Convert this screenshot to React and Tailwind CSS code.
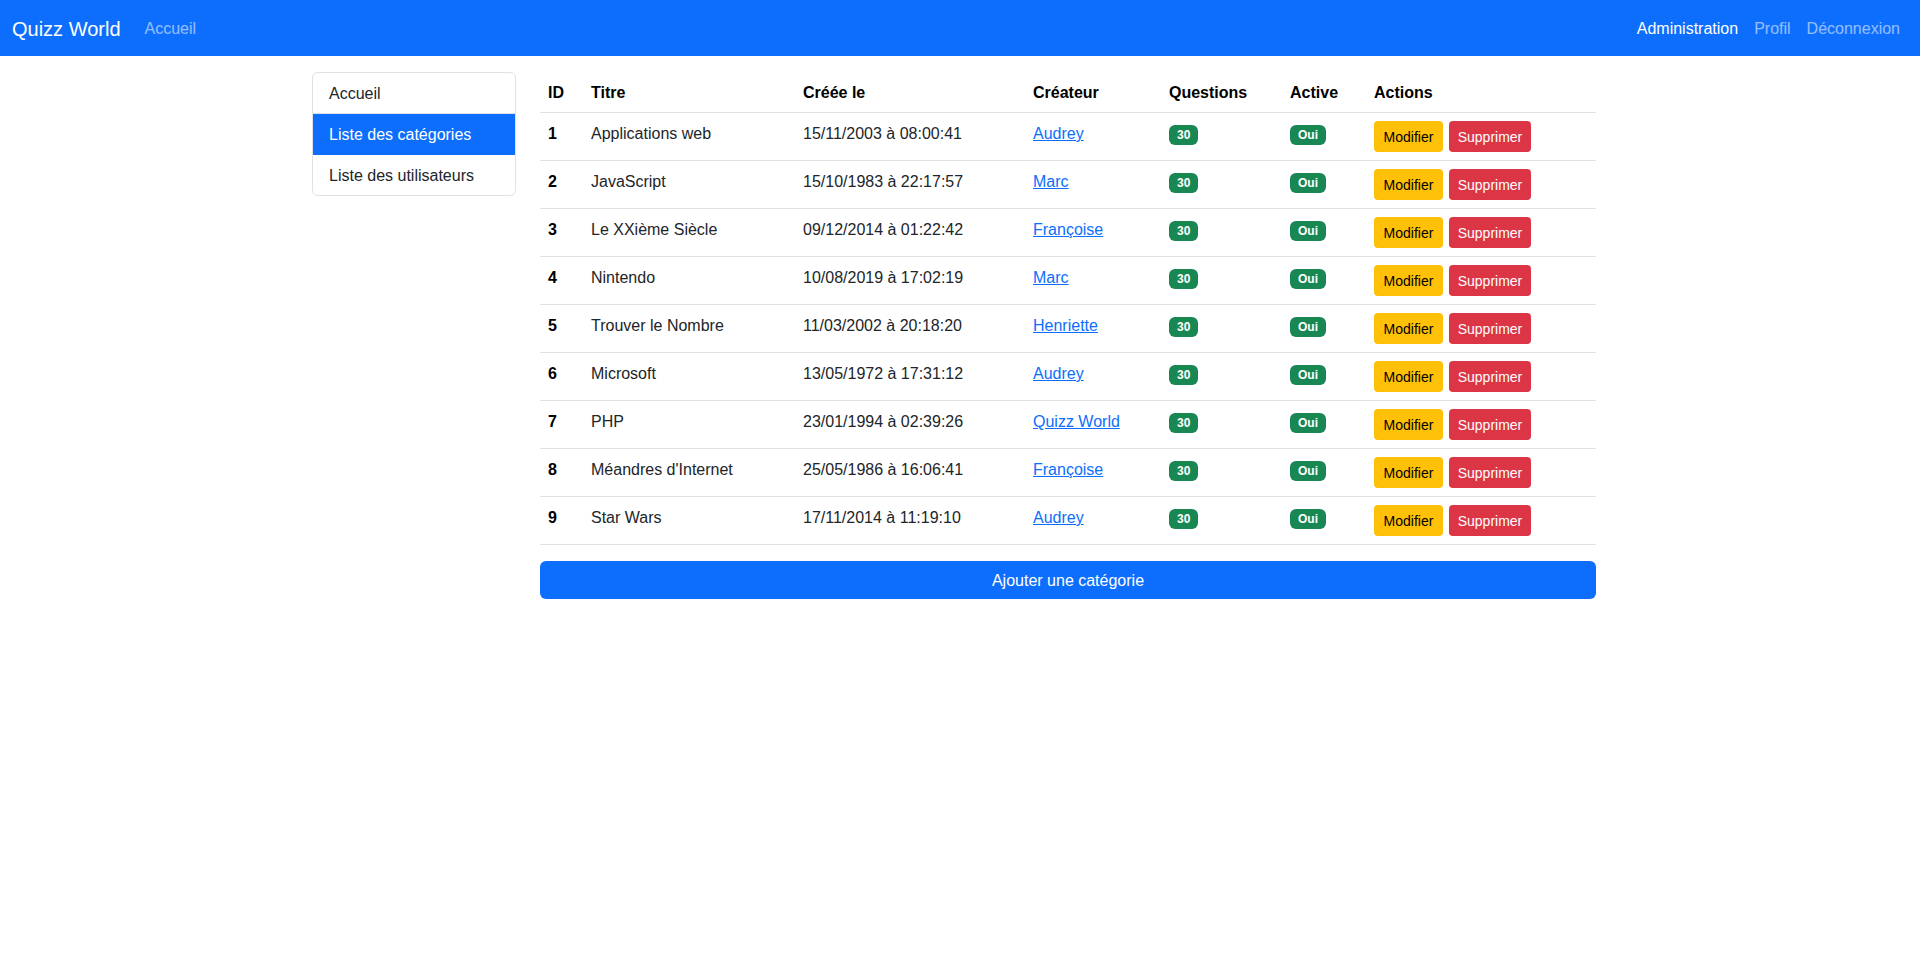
import React from "react";

const rows = [
  [1, "Applications web", "15/11/2003 à 08:00:41", "Audrey"],
  [2, "JavaScript", "15/10/1983 à 22:17:57", "Marc"],
  [3, "Le XXième Siècle", "09/12/2014 à 01:22:42", "Françoise"],
  [4, "Nintendo", "10/08/2019 à 17:02:19", "Marc"],
  [5, "Trouver le Nombre", "11/03/2002 à 20:18:20", "Henriette"],
  [6, "Microsoft", "13/05/1972 à 17:31:12", "Audrey"],
  [7, "PHP", "23/01/1994 à 02:39:26", "Quizz World"],
  [8, "Méandres d'Internet", "25/05/1986 à 16:06:41", "Françoise"],
  [9, "Star Wars", "17/11/2014 à 11:19:10", "Audrey"],
];

export default function App() {
  return (
    <div
      className="min-h-[957px] bg-white text-[#212529] text-[16px] leading-6"
      style={{ fontFamily: '"Liberation Sans", Arial, sans-serif' }}
    >
      <nav className="h-14 bg-[#0d6efd] flex items-center justify-between px-3 pt-[2px]">
        <div className="flex items-center">
          <span className="text-white text-[20px] leading-[30px] mr-4">Quizz World</span>
          <a className="px-2 text-white/55">Accueil</a>
        </div>
        <div className="flex items-center">
          <a className="px-2 text-white">Administration</a>
          <a className="px-2 text-white/55">Profil</a>
          <a className="px-2 text-white/55">Déconnexion</a>
        </div>
      </nav>

      <div className="w-[1320px] mx-auto px-3 mt-4 flex gap-6">
        <div className="w-[204px] shrink-0 self-start border border-[#dee2e6] rounded-md overflow-hidden">
          <div className="px-4 pt-[9px] pb-[7px] border-b border-[#dee2e6]">Accueil</div>
          <div className="px-4 pt-[9px] pb-[7px] bg-[#0d6efd] text-white border-b border-[#0d6efd]">Liste des catégories</div>
          <div className="px-4 pt-[9px] pb-[7px]">Liste des utilisateurs</div>
        </div>

        <div className="w-[1056px] shrink-0">
          <table className="w-full table-fixed border-collapse mb-4 align-top">
            <colgroup>
              <col className="w-[43px]" />
              <col className="w-[212px]" />
              <col className="w-[230px]" />
              <col className="w-[136px]" />
              <col className="w-[121px]" />
              <col className="w-[84px]" />
              <col />
            </colgroup>
            <thead>
              <tr className="border-b border-[#dee2e6] text-left">
                {["ID", "Titre", "Créée le", "Créateur", "Questions", "Active", "Actions"].map((h) => (
                  <th key={h} className="px-2 pt-[9px] pb-[7px] font-bold text-black align-top">{h}</th>
                ))}
              </tr>
            </thead>
            <tbody>
              {rows.map(([id, title, date, user]) => (
                <tr key={id} className="border-b border-[#dee2e6]">
                  <td className="px-2 pt-[9px] pb-[7px] font-bold text-black align-top">{id}</td>
                  <td className="px-2 pt-[9px] pb-[7px] align-top">{title}</td>
                  <td className="px-2 pt-[9px] pb-[7px] align-top">{date}</td>
                  <td className="px-2 pt-[9px] pb-[7px] align-top">
                    <a className="text-[#0d6efd] underline">{user}</a>
                  </td>
                  <td className="px-2 pt-[12px] pb-[7px] align-top">
                    <span className="block w-fit bg-[#198754] text-white text-[12px] font-bold leading-none px-[8px] py-[4px] rounded-md">30</span>
                  </td>
                  <td className="px-2 pt-[12px] pb-[7px] align-top">
                    <span className="block w-fit bg-[#198754] text-white text-[12px] font-bold leading-none px-[8px] py-[4px] rounded-md">Oui</span>
                  </td>
                  <td className="p-2 align-top">
                    <div className="flex gap-[6px]">
                      <button className="h-[31px] w-[69px] text-[14px] bg-[#ffc107] text-black rounded">Modifier</button>
                      <button className="h-[31px] w-[82px] text-[14px] bg-[#dc3545] text-white rounded">Supprimer</button>
                    </div>
                  </td>
                </tr>
              ))}
            </tbody>
          </table>
          <button className="w-full h-[38px] bg-[#0d6efd] text-white rounded-md pt-[1px]">Ajouter une catégorie</button>
        </div>
      </div>
    </div>
  );
}
